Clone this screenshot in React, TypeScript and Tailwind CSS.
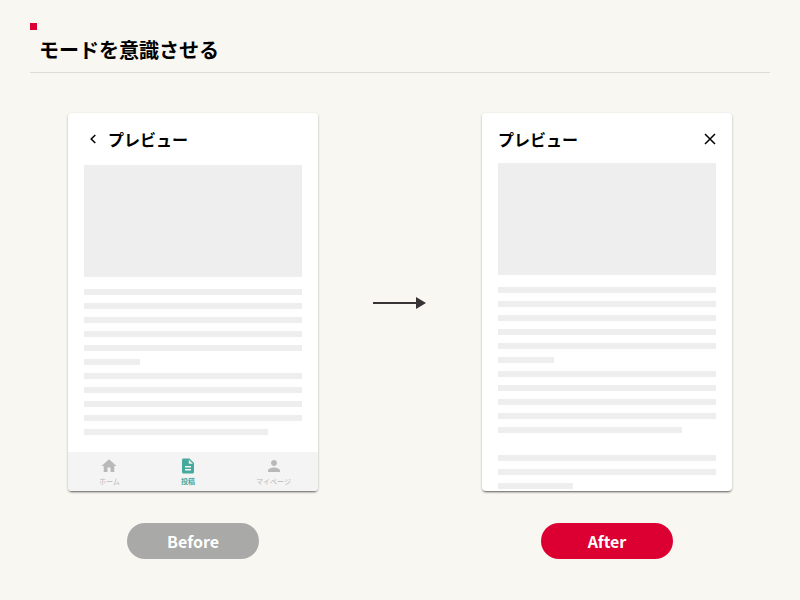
import { clsx } from "clsx";
import type { ReactNode } from "react";

const BEFORE_LINES = [
  "w-full",
  "w-full",
  "w-full",
  "w-full",
  "w-full",
  "w-14",
  "w-full",
  "w-full",
  "w-full",
  "w-full",
  "w-46",
];

// "w-0" leaves an empty row between paragraphs
const AFTER_LINES = [...BEFORE_LINES, "w-0", "w-full", "w-full", "w-[75px]"];

const NAV_ITEMS = [
  { label: "ホーム", path: "M10 20v-6h4v6h5v-8h3L12 3 2 12h3v8z", active: false },
  {
    label: "投稿",
    path: "M14 2H6c-1.1 0-2 .9-2 2v16c0 1.1.9 2 2 2h12c1.1 0 2-.9 2-2V8l-6-6zm2 16H8v-2h8v2zm0-4H8v-2h8v2zm-3-5V3.500L18.500 9H13z",
    active: true,
  },
  {
    label: "マイページ",
    path: "M12 12c2.210 0 4-1.790 4-4s-1.790-4-4-4-4 1.790-4 4 1.790 4 4 4zm0 2c-2.670 0-8 1.340-8 4v2h16v-2c0-2.660-5.330-4-8-4z",
    active: false,
  },
];

export default function App() {
  return (
    <main
      lang="ja"
      className="min-h-screen bg-[#f8f7f2] font-['Noto_Sans_CJK_JP',sans-serif] text-black"
    >
      <header className="mx-[30px] border-b border-[#dcdcd9] pt-[23px] pb-[7px]">
        <div className="size-[7px] bg-[#dc0032]" />
        <h1 className="mt-[5px] ml-[9px] text-[20px] leading-[30px] font-bold">
          モードを意識させる
        </h1>
      </header>

      <div className="flex justify-between px-[68px] pt-10">
        <Example caption="Before" captionClass="bg-[#a9a9a8]">
          <div className="flex h-[52px] items-center gap-1 px-4">
            <button type="button" aria-label="戻る" className="flex size-5 items-center justify-center">
              <svg viewBox="0 0 10 10" className="size-[10px]" fill="none" stroke="currentColor" strokeWidth="1.5">
                <path d="M6.300 1 2.200 5l4.100 4" />
              </svg>
            </button>
            <h2 className="text-base font-bold">プレビュー</h2>
          </div>
          <Article lines={BEFORE_LINES} />
          <nav className="mt-auto flex h-[39px] shrink-0 justify-between bg-[#f4f4f4] pt-[5px] pr-[27px] pl-[31px]">
            {NAV_ITEMS.map((item) => (
              <a
                key={item.label}
                href="#"
                aria-current={item.active ? "page" : undefined}
                className={clsx(
                  "flex flex-col items-center text-[7px] leading-[11px]",
                  item.active ? "font-bold text-[#45aa9d]" : "text-[#b9b9b9]"
                )}
              >
                <svg viewBox="0 0 24 24" className="-mx-1 mb-px size-[18px]" fill="currentColor">
                  <path d={item.path} />
                </svg>
                {item.label}
              </a>
            ))}
          </nav>
        </Example>

        <svg viewBox="0 0 54 12" className="mt-[184px] h-3 w-[54px]" fill="#383335">
          <path d="M0 5h43v2H0zM43 0l10 6-10 6z" />
        </svg>

        <Example caption="After" captionClass="bg-[#dc0032]">
          <div className="flex h-[50px] items-center justify-between px-4 pt-[2px]">
            <h2 className="text-base font-bold">プレビュー</h2>
            <button type="button" aria-label="閉じる">
              <svg viewBox="0 0 12 12" className="size-3" fill="none" stroke="currentColor" strokeWidth="1.5">
                <path d="m1 1 10 10M11 1 1 11" />
              </svg>
            </button>
          </div>
          <Article lines={AFTER_LINES} />
        </Example>
      </div>
    </main>
  );
}

interface ExampleProps {
  caption: string;
  captionClass: string;
  children: ReactNode;
}

function Example({ caption, captionClass, children }: ExampleProps) {
  return (
    <figure className="flex flex-col items-center gap-8">
      <div className="flex min-h-[378px] w-[250px] flex-col overflow-hidden rounded bg-white shadow-[0_2px_2px_-1px_rgba(0,0,0,0.5),0_1px_3px_rgba(0,0,0,0.2)]">
        {children}
      </div>
      <figcaption
        className={clsx(
          "flex h-9 w-[132px] items-center justify-center rounded-full text-base font-bold text-white",
          captionClass
        )}
      >
        {caption}
      </figcaption>
    </figure>
  );
}

// Placeholder article: one image block and rows of text
function Article({ lines }: { lines: string[] }) {
  return (
    <div className="px-4">
      <div className="h-28 bg-[#eeeeee]" />
      <div className="mt-3 flex flex-col gap-2">
        {lines.map((width, i) => (
          <div key={i} className={clsx("h-[6px] bg-[#eeeeee]", width)} />
        ))}
      </div>
    </div>
  );
}
